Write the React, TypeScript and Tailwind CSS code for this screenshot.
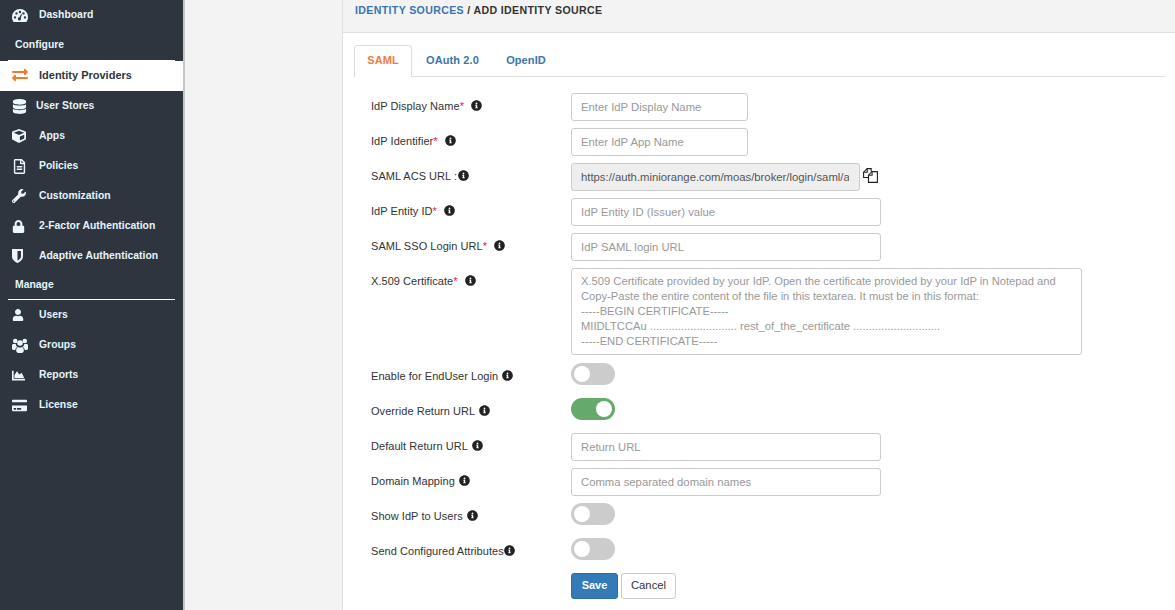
import type { ReactNode } from "react";
import {
  FaExchangeAlt,
  FaDatabase,
  FaCube,
  FaRegFileAlt,
  FaWrench,
  FaLock,
  FaUser,
  FaChartArea,
  FaCreditCard,
  FaInfoCircle,
} from "react-icons/fa";

function GaugeIcon() {
  return (
    <svg width="16" height="13" viewBox="0 0 16 13" fill="currentColor">
      <path
        fillRule="evenodd"
        d="M8 0a8 8 0 0 1 8 8c0 1.9-.6 3.6-1.7 5H1.700C.6 11.600 0 9.900 0 8a8 8 0 0 1 8-8zM3 7.200a1.200 1.200 0 1 0 0 2.400 1.200 1.200 0 0 0 0-2.400zM4.500 3.200a1.200 1.200 0 1 0 0 2.400 1.200 1.200 0 0 0 0-2.400zM8 1.800a1.200 1.200 0 1 0 0 2.400 1.200 1.200 0 0 0 0-2.400zM11.500 3.200a1.200 1.200 0 1 0 0 2.400 1.200 1.200 0 0 0 0-2.400zM13 7.200a1.200 1.200 0 1 0 0 2.400 1.200 1.200 0 0 0 0-2.400zM9.200 5L7.300 8.300a1.600 1.600 0 1 0 1.400.6L10 5.300z"
      />
    </svg>
  );
}

function ShieldIcon() {
  return (
    <svg width="11" height="14" viewBox="0 0 11 14" fill="currentColor">
      <path
        fillRule="evenodd"
        d="M0 0h11v7.500C11 10.500 8 13 5.500 14 3 13 0 10.500 0 7.500zM5.500 2v9.700C7.500 10.700 9 9 9 7.500V2z"
      />
    </svg>
  );
}

function GroupIcon() {
  return (
    <svg width="16" height="15" viewBox="0 0 16 15" fill="currentColor">
      <circle cx="3.200" cy="3" r="2.300" />
      <circle cx="12.800" cy="3" r="2.300" />
      <circle cx="8" cy="5" r="2.800" />
      <path d="M0 11V7.500C0 6.500.7 6 1.500 6h2.300c.1 1.200.7 2.200 1.500 2.900C4 9.500 3.400 10.500 3.300 12 1.500 12 0 11.800 0 11zM16 11V7.500c0-1-.7-1.500-1.500-1.500h-2.300c-.1 1.200-.7 2.200-1.500 2.900 1.300.6 1.900 1.600 2 3.100 1.800 0 3.300-.2 3.300-1z" />
      <path d="M4.200 12.500C4.200 10.500 5 9.300 6 9c.6.4 1.300.6 2 .6s1.400-.2 2-.6c1 .3 1.800 1.500 1.800 3.500 0 1.500-1 2.500-2.200 2.500H6.400c-1.200 0-2.200-1-2.200-2.500z" />
    </svg>
  );
}

function FilesIcon() {
  return (
    <svg width="15" height="15" viewBox="0 0 15 15" fill="none" stroke="currentColor" strokeWidth="1.100">
      <path d="M5.500 9.500H.6V4.200L4.200.6h4v3" />
      <path d="M4.200.6v3.600H.6" />
      <path d="M5.500 14.400V7.200l3.600-3.600h5.300v10.800z" />
      <path d="M9.100 3.600v3.600H5.500" />
    </svg>
  );
}

function NavItem({ icon, label, active, textLeft = "pl-[39px]" }: { icon: ReactNode; label: string; active?: boolean; textLeft?: string }) {
  return (
    <div className={`relative flex h-[30px] items-center font-bold ${textLeft} ${active ? "bg-white pb-[2px] text-[11px] text-[#2f353f]" : "text-[10.4px] text-[#e4f4fb]"}`}>
      <span className={`absolute left-[12px] flex items-center ${active ? "text-[#f47a2a]" : "text-[#eaf7fd]"}`}>{icon}</span>
      {label}
    </div>
  );
}

function SectionTitle({ label, h = "h-[30px]" }: { label: string; h?: string }) {
  return (
    <div className={`flex ${h} items-center pl-[15px] text-[10.4px] font-bold text-[#e4f4fb]`}>{label}</div>
  );
}

function Label({ text, required, gap = "ml-[7px]" }: { text: string; required?: boolean; gap?: string }) {
  return (
    <div className="flex w-[200px] shrink-0 items-center pt-[5px] text-[11px] leading-[17px] tracking-[0.05px] text-[#333]">
      <span>
        {text}
        {required && <span className="text-[#e8124f]">*</span>}
      </span>
      <FaInfoCircle className={`${gap} mb-[3px] text-[11px] text-[#222]`} />
    </div>
  );
}

function TextInput({ placeholder, width, raised }: { placeholder: string; width: string; raised?: boolean }) {
  return (
    <div className={`flex h-[28px] ${width} items-center rounded-[3px] border border-[#ccc] bg-white pl-[9px] text-[11.3px] text-[#999] ${raised ? "" : "pt-[1px]"}`}>
      {placeholder}
    </div>
  );
}

function Toggle({ on }: { on?: boolean }) {
  return (
    <div className={`flex h-[22px] w-[44px] items-center rounded-full px-[3px] ${on ? "justify-end bg-[#66a96d]" : "justify-start bg-[#ccc]"}`}>
      <div className="h-[16px] w-[16px] rounded-full bg-white" />
    </div>
  );
}

function Row({ children, h = "h-[28px]" }: { children: ReactNode; h?: string }) {
  return <div className={`flex ${h} items-start`}>{children}</div>;
}

export default function App() {
  return (
    <div className="flex h-[610px] w-[1175px] overflow-hidden bg-[#f3f3f3] font-['Liberation_Sans',Arial,sans-serif]">
      <aside className="h-full w-[185px] shrink-0 border-r-2 border-[#c4c6c8] bg-[#2f353f]">
        <NavItem icon={<GaugeIcon />} label="Dashboard" />
        <SectionTitle label="Configure" />
        <div className="mx-[8px] h-px bg-white" />
        <NavItem icon={<FaExchangeAlt className="text-[16px]" />} label="Identity Providers" active />
        <NavItem icon={<FaDatabase className="text-[15px]" />} label="User Stores" textLeft="pl-[36px]" />
        <NavItem icon={<FaCube className="text-[14px]" />} label="Apps" />
        <NavItem icon={<FaRegFileAlt className="text-[15px]" />} label="Policies" />
        <NavItem icon={<FaWrench className="text-[14px]" />} label="Customization" />
        <NavItem icon={<FaLock className="text-[13px]" />} label="2-Factor Authentication" />
        <NavItem icon={<ShieldIcon />} label="Adaptive Authentication" />
        <SectionTitle label="Manage" h="h-[28px]" />
        <div className="mx-[8px] h-px bg-white" />
        <NavItem icon={<FaUser className="text-[12px]" />} label="Users" />
        <NavItem icon={<GroupIcon />} label="Groups" />
        <NavItem icon={<FaChartArea className="text-[13px]" />} label="Reports" />
        <NavItem icon={<FaCreditCard className="text-[15px]" />} label="License" />
      </aside>

      <div className="w-[157px] shrink-0" />

      <main className="flex min-w-0 flex-1 flex-col">
        <div className="h-[33px] shrink-0 border-b border-l border-[#e0e0e0] bg-[#f3f3f3] pl-[12px] pt-[3px] text-[10.6px] font-bold leading-[14px] tracking-[0.35px] text-[#333]">
          <span className="text-[#3a75ad]">IDENTITY SOURCES</span> / ADD IDENTITY SOURCE
        </div>

        <div className="flex-1 border-l border-[#e0e0e0] bg-white pl-[11px] pr-[10px] pt-[12px]">
          <div className="flex h-[32px] border-b border-[#ddd] text-[11px] font-bold tracking-[0.1px]">
            <div className="flex h-[32px] w-[58px] items-center justify-center rounded-t-[3px] border border-b-0 border-[#ddd] bg-white pb-[2px] text-[#f47a3c]">SAML</div>
            <div className="flex h-[31px] w-[81px] items-center justify-center text-[#3a75ad]">OAuth 2.0</div>
            <div className="flex h-[31px] w-[66px] items-center justify-center text-[#3a75ad]">OpenID</div>
          </div>

          <div className="flex flex-col gap-[7px] pl-[17px] pt-[16px]">
            <Row>
              <Label text="IdP Display Name" required />
              <TextInput placeholder="Enter IdP Display Name" width="w-[177px]" />
            </Row>
            <Row>
              <Label text="IdP Identifier" required />
              <TextInput placeholder="Enter IdP App Name" width="w-[177px]" />
            </Row>
            <Row>
              <Label text="SAML ACS URL :" gap="ml-[1px]" />
              <div className="h-[28px] w-[289px] rounded-[3px] border border-[#ccc] bg-[#eee] pl-[9px] pr-[10px] text-[11.3px] leading-[26px] text-[#555]">
                <div className="overflow-hidden whitespace-nowrap">https://auth.miniorange.com/moas/broker/login/saml/acs/customerid</div>
              </div>
              <span className="ml-[3px] mt-[5px] text-[#222]"><FilesIcon /></span>
            </Row>
            <Row>
              <Label text="IdP Entity ID" required />
              <TextInput placeholder="IdP Entity ID (Issuer) value" width="w-[310px]" />
            </Row>
            <Row>
              <Label text="SAML SSO Login URL" required />
              <TextInput placeholder="IdP SAML login URL" width="w-[310px]" />
            </Row>
            <Row h="h-[87px]">
              <Label text="X.509 Certificate" required />
              <div className="h-[87px] w-[511px] rounded-[3px] border border-[#ccc] bg-white pl-[9px] pt-[5px] text-[11.2px] leading-[15px] text-[#999]">
                X.509 Certificate provided by your IdP. Open the certificate provided by your IdP in Notepad and
                <br />
                Copy-Paste the entire content of the file in this textarea. It must be in this format:
                <br />
                -----BEGIN CERTIFICATE-----
                <br />
                MIIDLTCCAu ............................ rest_of_the_certificate ............................
                <br />
                -----END CERTIFICATE-----
              </div>
            </Row>
            <div className="mt-px">
              <Row>
                <Label text="Enable for EndUser Login" gap="ml-[4px]" />
                <Toggle />
              </Row>
            </div>
            <Row>
              <Label text="Override Return URL" gap="ml-[4px]" />
              <Toggle on />
            </Row>
            <Row>
              <Label text="Default Return URL" gap="ml-[4px]" />
              <TextInput placeholder="Return URL" width="w-[310px]" raised />
            </Row>
            <Row>
              <Label text="Domain Mapping" gap="ml-[4px]" />
              <TextInput placeholder="Comma separated domain names" width="w-[310px]" raised />
            </Row>
            <Row>
              <Label text="Show IdP to Users" gap="ml-[4px]" />
              <Toggle />
            </Row>
            <Row>
              <Label text="Send Configured Attributes" gap="ml-0" />
              <Toggle />
            </Row>
            <div className="flex gap-[3px] pl-[200px]">
              <button className="flex h-[26px] w-[47px] items-center justify-center rounded-[3px] border border-[#2e6da4] bg-[#337ab7] pb-[2px] text-[11px] font-bold text-white">Save</button>
              <button className="flex h-[26px] w-[55px] items-center justify-center rounded-[3px] border border-[#ccc] bg-white pb-[2px] text-[11.3px] text-[#333]">Cancel</button>
            </div>
          </div>
        </div>
      </main>
    </div>
  );
}
